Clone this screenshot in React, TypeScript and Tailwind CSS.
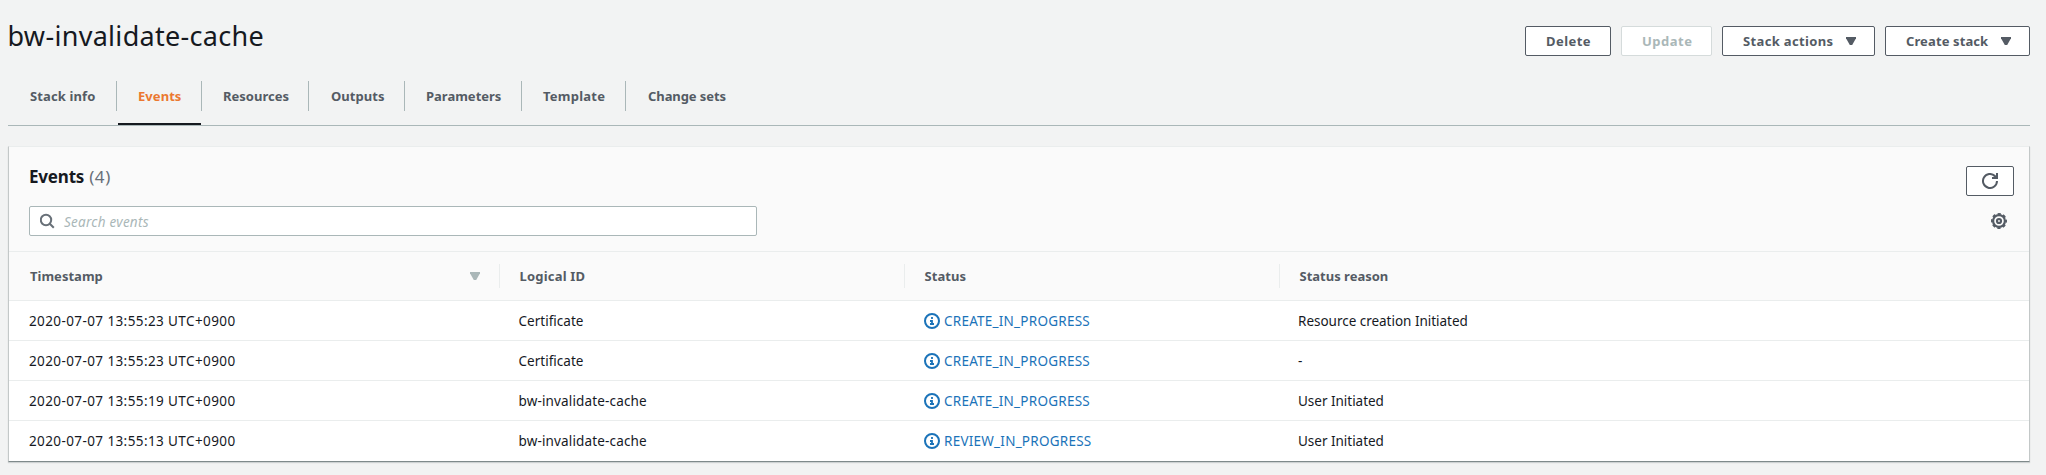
import type { ReactNode } from "react";

const tabs = [
  { label: "Stack info", box: "w-[109px] pl-[22px]", track: "tracking-[0.12px]" },
  { label: "Events", box: "w-[85px] pl-[21px]", track: "tracking-[0.06px]", active: true },
  { label: "Resources", box: "w-[107px] pl-[21px]", track: "tracking-[0px]" },
  { label: "Outputs", box: "w-[96px] pl-[22px]", track: "tracking-[0.05px]" },
  { label: "Parameters", box: "w-[117px] pl-[21px]", track: "tracking-[0px]" },
  { label: "Template", box: "w-[104px] pl-[21px]", track: "tracking-[0.24px]" },
  { label: "Change sets", box: "w-[122px] pl-[22px]", track: "tracking-[-0.08px]" },
];

const rows = [
  { time: "2020-07-07 13:55:23 UTC+0900", id: "Certificate", idTrack: "tracking-[0.02px]", status: "CREATE_IN_PROGRESS", reason: "Resource creation Initiated" },
  { time: "2020-07-07 13:55:23 UTC+0900", id: "Certificate", idTrack: "tracking-[0.02px]", status: "CREATE_IN_PROGRESS", reason: "-" },
  { time: "2020-07-07 13:55:19 UTC+0900", id: "bw-invalidate-cache", idTrack: "tracking-[0.15px]", status: "CREATE_IN_PROGRESS", reason: "User Initiated" },
  { time: "2020-07-07 13:55:13 UTC+0900", id: "bw-invalidate-cache", idTrack: "tracking-[0.15px]", status: "REVIEW_IN_PROGRESS", reason: "User Initiated" },
];

const columns = "grid grid-cols-[490px_405px_375px_1fr]";

function Caret({ className = "" }: { className?: string }) {
  return (
    <svg className={`h-2 w-2.5 shrink-0 ${className}`} viewBox="0 0 10 8" fill="currentColor">
      <path d="M0 0h10v1.2L6.2 8H3.8L0 1.2z" />
    </svg>
  );
}

function InfoIcon() {
  return (
    <svg className="size-4 shrink-0" viewBox="0 0 16 16" fill="none" stroke="currentColor" strokeWidth="2">
      <circle cx="8" cy="8" r="7" />
      <path d="M8 4v2M6 8h2v3M6 11h4" strokeWidth="1.8" />
    </svg>
  );
}

function SearchIcon() {
  return (
    <svg className="size-4 shrink-0 text-[#687078]" viewBox="0 0 16 16" fill="none" stroke="currentColor" strokeWidth="2">
      <circle cx="6" cy="7" r="5.2" />
      <path d="M9.8 10.8l4 4" />
    </svg>
  );
}

function RefreshIcon() {
  return (
    <svg className="size-4" viewBox="0 0 16 16" fill="none" stroke="currentColor" strokeWidth="2">
      <path d="M15 8a7 7 0 1 1-2.1-5" />
      <path d="M10 5h5V0" />
      <path d="M12.2 2.4L14 4.4" />
    </svg>
  );
}

function GearIcon() {
  return (
    <svg className="size-4 text-[#545b64]" viewBox="0 0 16 16" fill="none" stroke="currentColor">
      <circle cx="8" cy="8" r="5.9" strokeWidth="2.2" />
      <circle cx="8" cy="8" r="7.1" strokeWidth="1.8" strokeDasharray="3.2 2.376" strokeDashoffset="1.6" />
      <circle cx="8" cy="8" r="2" strokeWidth="2.2" />
    </svg>
  );
}

function Button({ box, track, disabled, children }: { box: string; track: string; disabled?: boolean; children: ReactNode }) {
  return (
    <button
      disabled={disabled}
      className={`flex h-[30px] items-center rounded-xs border bg-white pl-[20px] text-left font-bold ${box} ${track} ${
        disabled ? "border-[#d5dbdb] text-[#aab7b8]" : "border-[#545b64] text-[#545b64]"
      }`}
    >
      {children}
    </button>
  );
}

function HeaderCell({ first, track, children }: { first?: boolean; track: string; children: ReactNode }) {
  return (
    <div className={`flex h-6 items-center font-bold ${track} ${first ? "pl-[21px]" : "border-l border-[#eaeded] pl-[19.5px]"}`}>
      {children}
    </div>
  );
}

export default function App() {
  return (
    <div className="h-[475px] w-[2046px] bg-[#f2f3f3] pr-4 pl-2 font-['Noto_Sans',sans-serif] text-[13px] leading-5 text-[#16191f]">
      <header className="flex h-[76px] items-start justify-between">
        <h1 className="-ml-[0.5px] pt-[18px] text-[27px] leading-9 tracking-[0.3px]">bw-invalidate-cache</h1>
        <div className="flex gap-[10px] pt-[26px]">
          <Button box="w-[86px]" track="tracking-[0.45px]">Delete</Button>
          <Button box="w-[91px]" track="tracking-[0.5px]" disabled>Update</Button>
          <Button box="w-[153px]" track="tracking-[0.35px]">
            Stack actions
            <Caret className="mr-[18px] ml-auto" />
          </Button>
          <Button box="w-[145px]" track="tracking-[0.11px]">
            Create stack
            <Caret className="mr-[18px] ml-auto" />
          </Button>
        </div>
      </header>

      <nav className="flex h-[50px] border-b border-[#aab7b8]">
        {tabs.map((tab, i) => (
          <div key={tab.label} className={`flex flex-col justify-between font-bold ${tab.active ? "text-[#eb7830]" : "text-[#545b64]"}`}>
            <div
              className={`mt-[5px] flex h-[30px] items-center whitespace-nowrap ${tab.box} ${tab.track} ${
                i < tabs.length - 1 ? "border-r border-[#aab7b8]" : ""
              }`}
            >
              {tab.label}
            </div>
            {tab.active && <div className="mr-px ml-px h-0.5 bg-[#16191f]" />}
          </div>
        ))}
      </nav>

      <main className="mt-5 h-[316px] border-x border-t border-b border-x-[#c3c8c8] border-t-[#eaeded] border-b-[#7f8a8b] bg-white shadow-[0_1px_1px_0_rgba(0,28,36,0.15)]">
        <div className="flex h-[105px] justify-between border-b border-[#eaeded] bg-[#fafafa] pr-[15px] pl-5">
          <div className="pt-[18px]">
            <h2 className="flex h-6 items-center gap-[5px] text-[17px] leading-6">
              <span className="font-bold tracking-[-0.2px]">Events</span>
              <span className="tracking-[0.6px] text-[#687078]">(4)</span>
            </h2>
            <div className="mt-[17px] flex h-[30px] w-[728px] items-center gap-2 rounded-xs border border-[#aab7b8] bg-white pl-[10px]">
              <SearchIcon />
              <span className="pt-px text-[13.5px] tracking-[0.26px] text-[#aab7b8] italic">Search events</span>
            </div>
          </div>
          <div className="flex flex-col items-end pt-[19px]">
            <button className="flex h-[30px] w-12 items-center justify-center rounded-xs border border-[#545b64] bg-white text-[#545b64]">
              <RefreshIcon />
            </button>
            <div className="mt-[17px] mr-[7px]">
              <GearIcon />
            </div>
          </div>
        </div>

        <div className={`${columns} h-[49px] items-center border-b border-[#eaeded] bg-[#fafafa] text-[#545b64]`}>
          <HeaderCell first track="tracking-[0.02px]">
            Timestamp
            <Caret className="mr-[19px] ml-auto text-[#aab7b8]" />
          </HeaderCell>
          <HeaderCell track="tracking-[0.2px]">Logical ID</HeaderCell>
          <HeaderCell track="tracking-[0.05px]">Status</HeaderCell>
          <HeaderCell track="tracking-[0px]">Status reason</HeaderCell>
        </div>

        {rows.map((row, i) => (
          <div key={i} className={`${columns} h-10 items-center border-b text-[13.5px] ${i < rows.length - 1 ? "border-[#eaeded]" : "border-white"}`}>
            <div className="pt-px pl-5 tracking-[0.4px]">{row.time}</div>
            <div className={`pt-px pl-[19.5px] ${row.idTrack}`}>{row.id}</div>
            <div className="flex items-center gap-1 pl-5 tracking-[0.24px] text-[#1b73b9]">
              <InfoIcon />
              <span className="pt-px">{row.status}</span>
            </div>
            <div className="pt-px pl-[19px] tracking-[-0.02px]">{row.reason}</div>
          </div>
        ))}
      </main>
    </div>
  );
}
